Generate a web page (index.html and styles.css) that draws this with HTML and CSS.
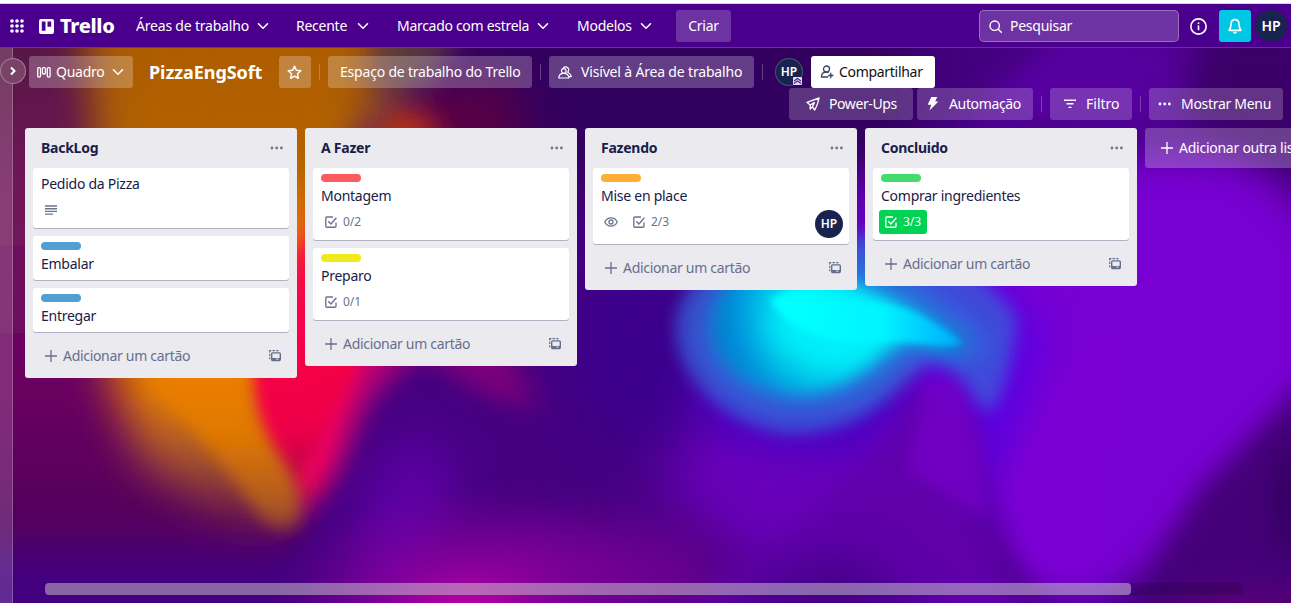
FILE: index.html
```html
<!DOCTYPE html>
<html lang="pt-BR">
<head>
<meta charset="utf-8">
<title>PizzaEngSoft | Trello</title>
<link rel="stylesheet" href="styles.css">
</head>
<body>
<svg class="defs" width="0" height="0" aria-hidden="true">
  <defs>
    <symbol id="chev" viewBox="0 0 12 12"><path d="M1.5 3.8 6 8.2l4.500-4.400" fill="none" stroke="currentColor" stroke-width="1.600" stroke-linecap="round" stroke-linejoin="round"/></symbol>
    <symbol id="check" viewBox="0 0 12 12"><path d="M8 1H1.700a.9.9 0 0 0-.9.9v8.400a.9.9 0 0 0 .9.9h8.400a.9.9 0 0 0 .9-.9V6.500M3.300 5.300l2.600 2.700L11.400 1.700" fill="none" stroke="currentColor" stroke-width="1.350"/></symbol>
    <symbol id="plus" viewBox="0 0 12 12"><path d="M6 0v12M0 6h12" stroke="currentColor" stroke-width="1.300"/></symbol>
    <symbol id="dots" viewBox="0 0 14 4"><circle cx="2" cy="2" r="1.400" fill="currentColor"/><circle cx="6.700" cy="2" r="1.400" fill="currentColor"/><circle cx="11.400" cy="2" r="1.400" fill="currentColor"/></symbol>
    <symbol id="template" viewBox="0 0 12 12"><path d="M0 .7h2.300M3.500.7h2.500M7.200.7h2.300M.7 0v2.500M.7 3.700v2.300M.7 7.200v2" stroke="currentColor" stroke-width="1.200"/><rect x="2.700" y="2.900" width="8.600" height="7.600" rx="1" fill="none" stroke="currentColor" stroke-width="1.400"/><path d="M3 8h8v2.400H3z" fill="currentColor"/><path d="M7.300 9.200h2" stroke="#ebecf0" stroke-width="1"/></symbol>
  </defs>
</svg>
<svg class="wallpaper" viewBox="0 0 1291 603" aria-hidden="true">
  <defs>
    <filter id="b3" x="-50%" y="-50%" width="200%" height="200%"><feGaussianBlur stdDeviation="3"/></filter>
    <filter id="b8" x="-50%" y="-50%" width="200%" height="200%"><feGaussianBlur stdDeviation="8"/></filter>
    <filter id="b14" x="-50%" y="-50%" width="200%" height="200%"><feGaussianBlur stdDeviation="14"/></filter>
    <filter id="b20" x="-50%" y="-50%" width="200%" height="200%"><feGaussianBlur stdDeviation="22"/></filter>
    <filter id="b28" x="-60%" y="-60%" width="220%" height="220%"><feGaussianBlur stdDeviation="28"/></filter>
    <linearGradient id="left" x1="0" y1="0" x2="0" y2="1"><stop offset="0" stop-color="#501040"/><stop offset=".3" stop-color="#701858"/><stop offset=".6" stop-color="#6a0060"/><stop offset=".8" stop-color="#55005c"/><stop offset="1" stop-color="#420084"/></linearGradient>
    <linearGradient id="amber" gradientUnits="userSpaceOnUse" x1="0" y1="48" x2="0" y2="540"><stop offset="0" stop-color="#ad5c00"/><stop offset=".24" stop-color="#b46400"/><stop offset=".4" stop-color="#f08000"/><stop offset=".7" stop-color="#e07a00"/><stop offset=".82" stop-color="#a8562a"/><stop offset="1" stop-color="#601048"/></linearGradient>
    <linearGradient id="ridge" gradientUnits="userSpaceOnUse" x1="0" y1="350" x2="0" y2="540"><stop offset="0" stop-color="#f08000"/><stop offset=".45" stop-color="#e07800"/><stop offset=".8" stop-color="#b05a20"/><stop offset="1" stop-color="#7a3040"/></linearGradient>
    <linearGradient id="red" gradientUnits="userSpaceOnUse" x1="250" y1="0" x2="410" y2="0"><stop offset="0" stop-color="#ff0038"/><stop offset=".45" stop-color="#f00064"/><stop offset="1" stop-color="#900080"/></linearGradient>
    <linearGradient id="crimson" gradientUnits="userSpaceOnUse" x1="260" y1="360" x2="300" y2="500"><stop offset="0" stop-color="#f80044"/><stop offset=".55" stop-color="#ec0048"/><stop offset="1" stop-color="#90004c"/></linearGradient>
    <radialGradient id="cyan" gradientUnits="userSpaceOnUse" cx="840" cy="312" r="125"><stop offset="0" stop-color="#00ffff"/><stop offset=".35" stop-color="#00ecf8"/><stop offset=".6" stop-color="#00c4e8"/><stop offset=".85" stop-color="#0090dc"/><stop offset="1" stop-color="#007cc8"/></radialGradient>
    <linearGradient id="stream" gradientUnits="userSpaceOnUse" x1="800" y1="0" x2="965" y2="0"><stop offset="0" stop-color="#00ffff"/><stop offset=".5" stop-color="#00f4ff"/><stop offset=".8" stop-color="#00c4ff"/><stop offset="1" stop-color="#00a8fa"/></linearGradient>
    <radialGradient id="pink" gradientUnits="userSpaceOnUse" cx="465" cy="615" r="200" gradientTransform="translate(0 210) scale(1 .66)"><stop offset="0" stop-color="#c800a8"/><stop offset=".4" stop-color="#90009c" stop-opacity=".8"/><stop offset="1" stop-color="#700090" stop-opacity="0"/></radialGradient>
  </defs>
  <rect width="1291" height="603" fill="#440080"/>
  <rect x="440" y="0" width="480" height="190" fill="#32005e" filter="url(#b28)"/>
  <path d="M-60 0H230V480L310 520 240 640H-60Z" fill="url(#left)" filter="url(#b14)"/>
  <path d="M-60 560H320V660H-60Z" fill="#430080" filter="url(#b20)"/>
  <path d="M420 80H520V220H420Z" fill="#560044" filter="url(#b20)"/>
  <path d="M245 150 440 150 500 220 520 340 425 360 370 400 335 480 300 515 240 450Z" fill="url(#red)" filter="url(#b14)"/>
  <path d="M380 110H430L450 180H370Z" fill="#b82c18" filter="url(#b14)"/>
  <path d="M420 330 500 330 540 410Q470 410 420 355Z" fill="#7c007c" filter="url(#b14)"/>
  <path d="M428 362Q388 395 365 460L310 560 300 640H560V430Q470 410 428 362Z" fill="#450080" filter="url(#b14)"/>
  <path d="M75 -40H385L395 120 340 150 302 210H110Z" fill="#a25608" filter="url(#b20)"/>
  <path d="M110 0H345L335 130 302 210 290 260 250 370Q248 425 285 480 300 510 270 525 190 510 140 460L110 375Z" fill="url(#amber)" filter="url(#b20)"/>
  <path d="M180 0H350L335 150 312 210 300 240 250 370 225 410 160 400Z" fill="url(#amber)" filter="url(#b14)"/>
  <path d="M252 345Q250 430 290 485 340 415 368 345Z" fill="url(#crimson)" filter="url(#b8)"/>
  <path d="M297 245H307V380H270Z" fill="#f80048" filter="url(#b8)"/>
  <path d="M160 345 250 345Q244 415 286 465 305 500 298 522 284 538 262 520 225 460 150 385Z" fill="url(#ridge)" filter="url(#b8)"/>
  <path d="M375 10H470L430 85 375 95Z" fill="#5c4430" opacity=".75" filter="url(#b14)"/>
  <ellipse cx="405" cy="525" rx="40" ry="90" transform="rotate(12 405 525)" fill="#6200ae" filter="url(#b28)"/>
  <ellipse cx="650" cy="350" rx="75" ry="100" fill="#3a008c" filter="url(#b28)"/>
  <path d="M740 380 950 350 940 480Q850 540 780 590L650 480Z" fill="#6900ba" filter="url(#b28)"/>
  <path d="M700 350 920 370 880 450Q780 470 700 420Z" fill="#4c00c4" filter="url(#b20)"/>
  <path d="M850 180 1200 150H1330V390L1190 540Q1120 620 1040 595 1000 540 970 400L850 320Z" fill="#7800d2" filter="url(#b20)"/>
  <path d="M870 230Q1000 240 1050 340L1030 420 990 540 945 400 860 310Z" fill="#5d00e0" filter="url(#b20)"/>
  <path d="M960 125 1060 30 1230 40 1180 125Z" fill="#5600a0" filter="url(#b14)"/>
  <path d="M1190 20H1330V240Q1290 170 1190 125Z" fill="#3b0068" filter="url(#b20)"/>
  <path d="M1000 480Q1000 540 1040 578L1100 580 1110 300Z" fill="#7a00d4" filter="url(#b14)"/>
  <path d="M660 625Q740 570 800 520 880 460 925 400 965 390 976 440 985 560 1040 630Z" fill="#5e00aa" filter="url(#b14)"/>
  <path d="M905 470 928 378 955 370Q972 390 988 520Z" fill="#7400c8" filter="url(#b8)" opacity=".8"/>
  <path d="M700 640Q770 550 860 555L960 640Z" fill="#46008a" filter="url(#b20)"/>
  <path d="M676 335C670 265 760 235 850 235 925 225 990 280 1016 315 1018 350 1000 405 990 412 970 405 965 362 930 362 905 370 880 436 785 434 715 422 678 370 676 335Z" fill="#3a5cd8" opacity=".78" filter="url(#b8)"/>
  <path d="M706 330C708 270 765 250 815 260 860 240 930 290 985 340 985 375 948 352 915 350 890 375 865 408 790 406 730 398 706 360 706 330Z" fill="#1a80dc" opacity=".85" filter="url(#b14)"/>
  <path d="M714 328C712 280 760 265 805 270 860 290 900 295 960 340 962 362 940 348 910 342 875 350 860 393 795 394 735 384 714 355 714 328Z" fill="url(#cyan)" filter="url(#b8)"/>
  <ellipse cx="825" cy="326" rx="52" ry="30" fill="#00eefa" filter="url(#b14)"/>
  <path d="M770 300Q790 285 820 294L852 303C900 304 908 310 925 318 942 328 955 334 962 344 940 350 915 338 880 342 840 346 790 335 770 300Z" fill="url(#stream)" filter="url(#b3)"/>
  <path d="M1330 360 1200 490 1110 640H1330Z" fill="#440078" filter="url(#b14)"/>
  <ellipse cx="1291" cy="500" rx="18" ry="55" fill="#300060" filter="url(#b14)"/>
  <ellipse cx="1250" cy="615" rx="80" ry="28" fill="#560078" filter="url(#b14)"/>
  <ellipse cx="590" cy="575" rx="130" ry="50" fill="#7c0096" opacity=".8" filter="url(#b28)"/>
  <rect x="250" y="430" width="420" height="173" fill="url(#pink)"/>
</svg>

<header class="topbar">
  <svg class="apps" viewBox="0 0 14 14" fill="#fff"><circle cx="2" cy="2" r="1.800"/><circle cx="7" cy="2" r="1.800"/><circle cx="12" cy="2" r="1.800"/><circle cx="2" cy="7" r="1.800"/><circle cx="7" cy="7" r="1.800"/><circle cx="12" cy="7" r="1.800"/><circle cx="2" cy="12" r="1.800"/><circle cx="7" cy="12" r="1.800"/><circle cx="12" cy="12" r="1.800"/></svg>
  <div class="logo"><svg viewBox="0 0 15 15"><path fill="#fff" fill-rule="evenodd" d="M2 0h11a2 2 0 0 1 2 2v11a2 2 0 0 1-2 2H2a2 2 0 0 1-2-2V2a2 2 0 0 1 2-2Zm.8 2.500v9.200h3.700V2.500Zm5.700 0v5.200h3.700V2.500Z"/></svg><span>Trello</span></div>
  <nav class="nav">
    <a class="n1"><span>Áreas de trabalho</span><svg><use href="#chev"/></svg></a>
    <a class="n2"><span>Recente</span><svg><use href="#chev"/></svg></a>
    <a class="n3"><span>Marcado com estrela</span><svg><use href="#chev"/></svg></a>
    <a class="n4"><span>Modelos</span><svg><use href="#chev"/></svg></a>
  </nav>
  <button class="create">Criar</button>
  <div class="search"><svg viewBox="0 0 13 13" fill="none" stroke="#fff" stroke-width="1.400"><circle cx="5.700" cy="5.700" r="4.700"/><path d="m9.200 9.200 3.100 3.100" stroke-linecap="round"/></svg><span>Pesquisar</span></div>
  <svg class="info" viewBox="0 0 16 16" fill="none" stroke="#fff"><circle cx="8" cy="8" r="7.200" stroke-width="1.500"/><path d="M8 7v4.500" stroke-width="1.500"/><circle cx="8" cy="4.900" r=".9" fill="#fff" stroke="none"/></svg>
  <button class="bell"><svg viewBox="0 0 14 16"><path d="M7 1.200c-2.500 0-3.700 1.700-3.900 4-.2 3-.4 4.500-1.900 6.600h11.600c-1.500-2.100-1.700-3.600-1.900-6.600-.2-2.300-1.400-4-3.900-4Z" fill="none" stroke="#fff" stroke-width="1.700" stroke-linejoin="round"/><path d="M5 13.300h4a2 2 0 0 1-4 0Z" fill="#fff"/></svg></button>
  <span class="avatar big">HP</span>
</header>

<div class="workspace">
  <aside class="rail"><button class="expand"><svg viewBox="0 0 8 10"><path d="m2 1.500 3.500 3.500L2 8.500" fill="none" stroke="#fff" stroke-width="2"/></svg></button></aside>
  <main class="board">
    <div class="tools">
      <button class="btn view"><svg viewBox="0 0 14 11" fill="none" stroke="#fff" stroke-width="1.300"><rect x=".7" y=".7" width="2.800" height="9.400" rx="1"/><rect x="5.400" y=".7" width="3" height="6.300" rx="1"/><rect x="10.300" y=".7" width="2.800" height="9.400" rx="1"/></svg><span>Quadro</span><svg class="chev"><use href="#chev"/></svg></button>
      <h1>PizzaEngSoft</h1>
      <button class="btn star"><svg viewBox="0 0 14 14"><path d="m7 1.100 1.700 3.800 4.200.5-3.100 2.800.8 4.200L7 10.300l-3.600 2.100.8-4.200L1.100 5.400l4.200-.5Z" fill="none" stroke="#fff" stroke-width="1.400" stroke-linejoin="round"/></svg></button>
      <i class="sep"></i>
      <button class="btn space"><span>Espaço de trabalho do Trello</span></button>
      <i class="sep"></i>
      <button class="btn visible"><svg viewBox="0 0 14 13" fill="none" stroke="#fff" stroke-width="1.200" stroke-linejoin="round"><circle cx="5.800" cy="5" r="2.300"/><path d="M5.200 2.700C5.500.8 8 .2 9.500 1.500c1.500 1.300 1.200 3.400.2 4.700 1.600.9 3.300 2.300 3.600 4.500h-2.300M.8 12c.1-2.800 2.300-4.600 5-4.600s4.900 1.800 5 4.600Z"/></svg><span>Visível à Área de trabalho</span></button>
      <i class="sep"></i>
      <span class="member"><span class="avatar">HP</span><svg viewBox="0 0 9 8"><rect width="9" height="8" rx="1" fill="#e7dcf2"/><path d="m1 4 3.500-2.500L8 4M1 6.500 4.500 4 8 6.500" fill="none" stroke="#54229a" stroke-width="1.200"/></svg></span>
      <button class="share"><svg viewBox="0 0 14 14" fill="none" stroke="#344563" stroke-width="1.300"><circle cx="6.500" cy="4" r="3"/><path d="M8.300 12H1.500c0-3 2-4.800 5-4.800.8 0 1.400.1 2 .4M10.800 7.800v5.400M8.200 10.500h5.200"/></svg><span>Compartilhar</span></button>
    </div>
    <div class="tools right">
      <button class="btn power"><svg viewBox="0 0 14 14"><path d="M13 1 1 5.300 4.100 8 8.300 5.600 6.400 9.900 8.800 13Q12 7.500 13 1ZM4.200 8v4l2.200-2" fill="none" stroke="#fff" stroke-width="1.400" stroke-linejoin="round"/></svg><span>Power-Ups</span></button>
      <button class="btn auto"><svg viewBox="0 0 12 14"><path d="M4.300 0h5.900L8.200 4.400h3.200L2.500 13.500l1.700-5.700H.7Z" fill="#fff"/></svg><span>Automação</span></button>
      <i class="sep"></i>
      <button class="btn filter"><svg viewBox="0 0 12 10" stroke="#fff" stroke-width="1.400"><path d="M0 1.200h12M2.500 4.800h7M4.500 8.400h3"/></svg><span>Filtro</span></button>
      <i class="sep"></i>
      <button class="btn menu"><svg viewBox="0 0 14 4"><use href="#dots"/></svg><span>Mostrar Menu</span></button>
    </div>
    <div class="lists">
      <section class="list">
        <h2>BackLog<svg><use href="#dots"/></svg></h2>
        <article class="card"><p>Pedido da Pizza</p><div class="badges"><svg class="desc" viewBox="0 0 12 10"><path d="M0 1h12M0 3.700h12M0 6.400h12M0 9.100h8" stroke="currentColor" stroke-width="1.400"/></svg></div></article>
        <article class="card"><i class="label blue"></i><p>Embalar</p></article>
        <article class="card"><i class="label blue"></i><p>Entregar</p></article>
        <footer><svg><use href="#plus"/></svg><span>Adicionar um cartão</span><svg class="tpl"><use href="#template"/></svg></footer>
      </section>
      <section class="list">
        <h2>A Fazer<svg><use href="#dots"/></svg></h2>
        <article class="card"><i class="label red"></i><p>Montagem</p><div class="badges"><span class="badge"><svg><use href="#check"/></svg>0/2</span></div></article>
        <article class="card"><i class="label yellow"></i><p>Preparo</p><div class="badges"><span class="badge"><svg><use href="#check"/></svg>0/1</span></div></article>
        <footer><svg><use href="#plus"/></svg><span>Adicionar um cartão</span><svg class="tpl"><use href="#template"/></svg></footer>
      </section>
      <section class="list">
        <h2>Fazendo<svg><use href="#dots"/></svg></h2>
        <article class="card"><i class="label orange"></i><p>Mise en place</p><div class="badges tall"><svg class="eye" viewBox="0 0 14 10" fill="none" stroke="currentColor" stroke-width="1.300"><path d="M.8 5C2 2.500 4.300.9 7 .9S12 2.500 13.200 5C12 7.500 9.700 9.100 7 9.100S2 7.500.8 5Z"/><circle cx="7" cy="5" r="2"/></svg><span class="badge"><svg><use href="#check"/></svg>2/3</span><span class="avatar solid">HP</span></div></article>
        <footer><svg><use href="#plus"/></svg><span>Adicionar um cartão</span><svg class="tpl"><use href="#template"/></svg></footer>
      </section>
      <section class="list">
        <h2>Concluido<svg><use href="#dots"/></svg></h2>
        <article class="card"><i class="label green"></i><p>Comprar ingredientes</p><div class="badges"><span class="badge done"><svg><use href="#check"/></svg>3/3</span></div></article>
        <footer><svg><use href="#plus"/></svg><span>Adicionar um cartão</span><svg class="tpl"><use href="#template"/></svg></footer>
      </section>
      <div class="addlist"><svg><use href="#plus"/></svg><span>Adicionar outra lista</span></div>
    </div>
    <div class="scroll"><div class="thumb"></div></div>
  </main>
</div>
</body>
</html>
```
FILE: styles.css
```css
* { box-sizing: border-box; }
body {
  margin: 0;
  width: 1291px;
  height: 603px;
  overflow: hidden;
  position: relative;
  display: flex;
  flex-direction: column;
  background: #440080;
  color: #172b4d;
  font: 14px/20px "Noto Sans", sans-serif;
  letter-spacing: -0.25px;
}
button { border: 0; margin: 0; padding: 0; font: inherit; letter-spacing: inherit; color: #fff; }
svg { display: block; flex: none; }
span { white-space: nowrap; }
.defs { position: absolute; }
.wallpaper { position: absolute; left: 0; top: 0; width: 1291px; height: 603px; z-index: -1; }

.topbar {
  height: 48px;
  flex: none;
  display: flex;
  align-items: center;
  padding: 4px 4px 0 10px;
  background: linear-gradient(#fff 0 3px, #d5d2dc 3px 4px, #4a008c 4px 47px, #6c2ba4 47px);
  color: #fff;
}
.apps { width: 14px; height: 14px; margin-right: 15px; }
.logo { display: flex; align-items: center; gap: 6px; width: 97px; font-weight: 800; font-size: 20px; letter-spacing: -0.350px; }
.logo svg { width: 15px; height: 15px; }
.nav { display: flex; width: 540px; }
.nav a { display: flex; align-items: center; justify-content: space-between; }
.nav svg, .view .chev { width: 12px; height: 12px; }
.n1 { width: 133px; margin-right: 27px; letter-spacing: -0.200px; }
.n2 { width: 73px; margin-right: 28px; }
.n3 { width: 152px; margin-right: 28px; letter-spacing: -0.300px; }
.n4 { width: 75px; }
.create { width: 55px; height: 32px; border-radius: 3px; background: rgba(255,255,255,.2); }
.search { width: 200px; height: 32px; margin-left: 248px; display: flex; align-items: center; gap: 8px; padding-left: 9px; border: 1px solid rgba(255,255,255,.3); border-radius: 5px; background: rgba(255,255,255,.2); }
.search svg { width: 13px; height: 13px; }
.info { width: 17px; height: 17px; margin: 0 12px 0 11px; }
.bell { width: 32px; height: 32px; border-radius: 3px; background: #00c7e5; display: flex; align-items: center; justify-content: center; }
.bell svg { width: 14px; height: 17px; }
.avatar { width: 28px; height: 28px; flex: none; border-radius: 50%; background: #19234f; color: #fff; font-size: 12px; line-height: 28px; font-weight: 600; text-align: center; letter-spacing: 0; }
.big { width: 32px; height: 32px; margin-left: 4px; line-height: 32px; font-size: 14px; }

.workspace { flex: 1; display: flex; min-height: 0; }
.rail { width: 13px; flex: none; background: rgba(255,255,255,.17); border-right: 1px solid rgba(255,255,255,.22); position: relative; }
.expand { position: absolute; left: 0; top: 10px; width: 26px; height: 26px; border-radius: 50%; border: 1px solid rgba(255,255,255,.3); background: #794368; display: flex; align-items: center; justify-content: center; }
.expand svg { width: 8px; height: 10px; }
.board { flex: 1; min-width: 0; display: flex; flex-direction: column; padding-top: 8px; overflow: hidden; }
.tools { height: 32px; flex: none; display: flex; align-items: center; padding-left: 16px; }
.right { justify-content: flex-end; padding-right: 8px; }
.btn, .share { height: 32px; flex: none; display: flex; align-items: center; border-radius: 3px; background: rgba(255,255,255,.24); }
.right .btn { background: rgba(255,255,255,.2); }
.view { width: 104px; padding-left: 8px; }
.view svg { width: 14px; height: 11px; margin-right: 5px; }
.view span { width: 56px; text-align: left; }
.view .chev { margin: 0; }
h1 { width: 146px; margin: 0; padding-left: 16px; font-size: 18px; line-height: 24px; font-weight: 700; color: #fff; letter-spacing: -0.070px; white-space: nowrap; }
.star { width: 32px; justify-content: center; }
.star svg { width: 15px; height: 15px; margin-right: 1px; }
.sep { width: 1px; height: 16px; margin: 0 8px; background: rgba(255,255,255,.24); }
.space { width: 204px; padding-left: 12px; letter-spacing: -0.200px; }
.visible { width: 205px; padding-left: 9px; gap: 9px; letter-spacing: -0.170px; }
.visible svg { width: 14px; height: 13px; }
.member { width: 28px; height: 28px; margin: 0 8px 0 4px; position: relative; }
.member .avatar { display: block; box-shadow: inset 0 0 0 1px #47506d; }
.member svg { position: absolute; right: 1px; bottom: 1px; width: 9px; height: 8px; }
.share { width: 124px; padding-left: 9px; gap: 5px; background: #fff; color: #111; letter-spacing: -0.300px; }
.share svg { width: 14px; height: 14px; }
.power { width: 124px; margin-right: 4px; padding-left: 17px; gap: 9px; letter-spacing: -0.400px; }
.power svg { width: 14px; height: 14px; }
.auto { width: 116px; padding-left: 10px; gap: 10px; letter-spacing: -0.350px; }
.auto svg { width: 12px; height: 14px; }
.filter { width: 82px; padding-left: 14px; gap: 10px; letter-spacing: 0; }
.filter svg { width: 12px; height: 10px; }
.menu { width: 134px; padding-left: 9px; gap: 9px; letter-spacing: -0.300px; }
.menu svg { width: 14px; height: 4px; }

.lists { display: flex; align-items: flex-start; gap: 8px; padding: 8px 0 0 12px; height: 463px; flex: none; }
.list { width: 272px; flex: none; border-radius: 3px; background: #ebeaef; padding: 0 8px; }
h2 { height: 40px; margin: 0; padding: 0 5px 0 8px; display: flex; align-items: center; justify-content: space-between; font-size: 14px; font-weight: 700; color: #172048; }
h2 svg { width: 14px; height: 4px; color: #6b778c; }
.card { background: #fff; border-radius: 3px; box-shadow: 0 1px 0 #b3b1c4; padding: 6px 8px 2px; margin-bottom: 8px; color: #172048; letter-spacing: -0.260px; }
.card p { margin: 0 0 4px; }
.label { display: block; width: 40px; height: 8px; border-radius: 4px; margin-bottom: 4px; }
.blue { background: #519fd0; }
.red { background: #fc5a5e; }
.yellow { background: #efea1c; }
.orange { background: #ffae35; }
.green { background: #43db6d; }
.badges { height: 24px; margin: 0 -2px 4px; display: flex; align-items: center; color: #6b7390; }
.badges.tall { height: 28px; align-items: flex-start; }
.desc { width: 12px; height: 10px; margin-left: 6px; }
.eye { width: 14px; height: 10px; margin: 7px 10px 0 5px; }
.badge { height: 24px; display: flex; align-items: center; gap: 6px; padding: 0 4px 0 6px; font-size: 12px; border-radius: 3px; letter-spacing: 0; }
.badge svg { width: 12px; height: 12px; }
.eye + .badge { padding-left: 5px; }
.done { width: 48px; background: #00d253; color: #fff; }
.solid { margin-left: auto; }
footer { height: 38px; display: flex; align-items: center; padding: 0 8px 6px 12px; color: #666f8d; letter-spacing: -0.310px; }
footer svg { width: 12px; height: 12px; }
footer span { flex: 1; padding-left: 6px; }
.addlist { width: 272px; height: 40px; flex: none; display: flex; align-items: center; gap: 6px; padding-left: 16px; border-radius: 3px; background: rgba(255,255,255,.24); color: #fff; }
.addlist svg { width: 12px; height: 12px; }
.scroll { width: 1198px; height: 12px; flex: none; margin-left: 32px; border-radius: 4px; background: rgba(0,0,0,.15); }
.thumb { width: 1086px; height: 12px; border-radius: 4px; background: rgba(255,255,255,.4); }
```
